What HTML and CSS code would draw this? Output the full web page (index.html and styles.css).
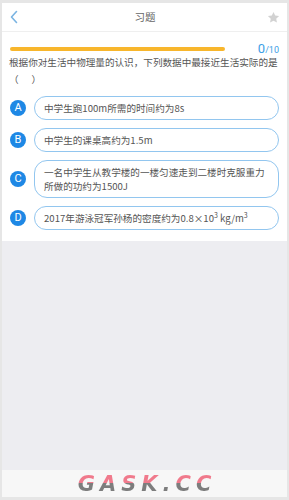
FILE: index.html
```html
<!DOCTYPE html>
<html lang="zh">
<head>
<meta charset="utf-8">
<title>习题</title>
<link rel="stylesheet" href="styles.css">
</head>
<body>
<div class="frame">
  <div class="header">
    <svg class="back" width="10" height="14" viewBox="0 0 10 14"><path d="M7.5 1.5 L2.5 7 L7.5 12.5" fill="none" stroke="#7ab4e2" stroke-width="1.6" stroke-linecap="round" stroke-linejoin="round"/></svg>
    <div class="title">习题</div>
    <svg class="star" width="13" height="13" viewBox="0 0 24 24"><path d="M12 1.8l3.1 6.6 7.2.9-5.3 5 1.4 7.1L12 17.9l-6.4 3.5 1.4-7.1-5.3-5 7.2-.9z" fill="#d2d2d2"/></svg>
  </div>
  <div class="content">
    <div class="progress-row">
      <div class="bar"></div>
      <div class="count"><span class="cur">0</span><span class="tot">/10</span></div>
    </div>
    <div class="question">根据你对生活中物理量的认识，下列数据中最接近生活实际的是（&nbsp;&nbsp;&nbsp;&nbsp;&nbsp;&nbsp;）</div>
    <div class="options">
      <div class="option"><div class="badge">A</div><div class="pill">中学生跑100m所需的时间约为8s</div></div>
      <div class="option"><div class="badge">B</div><div class="pill">中学生的课桌高约为1.5m</div></div>
      <div class="option"><div class="badge">C</div><div class="pill">一名中学生从教学楼的一楼匀速走到二楼时克服重力所做的功约为1500J</div></div>
      <div class="option"><div class="badge">D</div><div class="pill">2017年游泳冠军孙杨的密度约为0.8×10<sup>3</sup> kg/m<sup>3</sup></div></div>
    </div>
  </div>
  <div class="spacer"></div>
  <div class="footer"><span class="mark">GASK.CC</span></div>
</div>
</body>
</html>
```

FILE: styles.css
```css
html, body {
  margin: 0;
  padding: 0;
}
body {
  font-family: "Noto Sans CJK SC", "Noto Sans", sans-serif;
  color: #555;
}
.frame {
  width: 289px;
  height: 500px;
  box-sizing: border-box;
  border: 2px solid #e6e6e6;
  border-top-width: 3px;
  border-bottom-width: 3px;
  background: #ededf1;
  display: flex;
  flex-direction: column;
}
.header {
  height: 28px;
  background: #fff;
  border-bottom: 1px solid #efefef;
  display: flex;
  align-items: center;
  justify-content: space-between;
  padding: 0 7px 0 7px;
}
.title {
  font-size: 10.5px;
  color: #666;
  line-height: 14px;
  margin-left: 4px;
}
.back { display: block; }
.star { display: block; }
.content {
  background: #fff;
  padding: 9px 8px 11px 7px;
}
.progress-row {
  display: flex;
  align-items: center;
  justify-content: space-between;
  height: 14px;
}
.bar {
  width: 215px;
  height: 4px;
  margin-left: 1px;
  margin-top: 2px;
  border-radius: 2px;
  background: #f8b62c;
}
.count {
  color: #3d9ee6;
  line-height: 14px;
}
.cur { font-size: 13px; font-family: "Roboto", sans-serif; }
.tot { font-size: 9px; font-family: "Roboto", sans-serif; }
.question {
  font-size: 9.6px;
  line-height: 17px;
  margin-top: -1px;
}
.options {
  display: flex;
  flex-direction: column;
  gap: 8px;
  margin-top: 8px;
}
.option {
  display: flex;
  align-items: center;
  gap: 8px;
}
.badge {
  width: 16px;
  height: 16px;
  border-radius: 50%;
  background: #1e88e5;
  color: #fff;
  font-family: "Roboto", "Noto Sans", sans-serif;
  font-size: 11px;
  line-height: 16px;
  text-align: center;
  flex: none;
  margin-left: 1px;
}
.pill {
  flex: 1;
  border: 1px solid #92c6ef;
  border-radius: 13px;
  padding: 4px 8px 4px 9px;
  font-size: 9.6px;
  line-height: 14px;
  color: #555;
}
.pill sup {
  font-size: 7px;
  line-height: 0;
  vertical-align: 4px;
}
.spacer { flex: 1; }
.footer {
  height: 27px;
  background: #f7f7f7;
  display: flex;
  align-items: center;
  justify-content: center;
}
.mark {
  font-family: "DejaVu Sans", sans-serif;
  font-weight: bold;
  font-style: italic;
  font-size: 21px;
  letter-spacing: 5px;
  line-height: 24px;
  background: linear-gradient(to bottom, #f07a8c 0%, #f07a8c 45%, #7d7d7d 45%, #7d7d7d 100%);
  -webkit-background-clip: text;
  background-clip: text;
  color: transparent;
  margin-right: -5px;
}
```
